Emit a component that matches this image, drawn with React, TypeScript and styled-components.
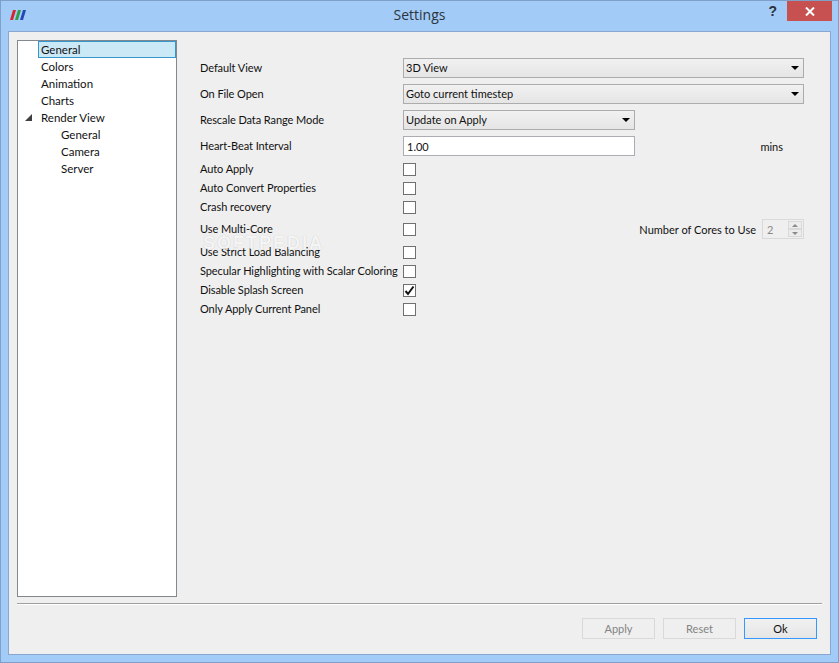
import styled, { createGlobalStyle } from 'styled-components';

const GlobalStyle = createGlobalStyle`
  html, body {
    margin: 0;
    padding: 0;
    background: #a3cbf7;
  }
  body {
    font-family: Lato, 'Noto Sans', sans-serif;
    font-size: 11px;
    color: #111;
  }
`;

const Window = styled.div`
  box-sizing: border-box;
  position: relative;
  display: flex;
  flex-direction: column;
  width: 839px;
  height: 663px;
  padding: 0 7px 7px;
  background: #a3cbf7;
  border: 1px solid #7f9fc6;
`;

const TitleBar = styled.div`
  display: flex;
  align-items: flex-start;
  height: 30px;
  flex-shrink: 0;
`;

const AppIcon = styled.svg`
  width: 16px;
  height: 11px;
  margin: 9px 0 0 2px;
`;

const Title = styled.div`
  position: absolute;
  top: 4px;
  left: 0;
  right: 0;
  text-align: center;
  font-family: 'Open Sans', sans-serif;
  font-size: 14px;
  color: #2a3440;
`;

const Help = styled.div`
  margin: 2px 10px 0 auto;
  font-family: 'Liberation Sans', sans-serif;
  font-size: 14px;
  font-weight: 700;
  color: #2b3138;
`;

const CloseButton = styled.div`
  display: flex;
  align-items: center;
  justify-content: center;
  width: 45px;
  height: 20px;
  margin-right: -1px;
  background: #c75050;
`;

const Client = styled.div`
  box-sizing: border-box;
  flex: 1;
  display: flex;
  flex-direction: column;
  padding: 8px;
  background: #efefef;
  border: 1px solid #8aa7cf;
`;

const Main = styled.div`
  display: flex;
  height: 557px;
`;

const Tree = styled.div`
  box-sizing: border-box;
  width: 160px;
  padding: 0;
  background: #fff;
  border: 1px solid #828790;
  flex-shrink: 0;
  font-size: 11.5px;
`;

const TreeRow = styled.div<{ $depth?: number; $selected?: boolean }>`
  box-sizing: border-box;
  position: relative;
  height: 17px;
  line-height: 15px;
  margin-left: 20px;
  padding-left: ${(p) => 2 + (p.$depth ?? 0) * 20}px;
  color: #111;
  background: ${(p) => (p.$selected ? '#cbe8f6' : 'transparent')};
  border: 1px solid ${(p) => (p.$selected ? '#3399cc' : 'transparent')};
`;

const Expander = styled.svg`
  position: absolute;
  left: -14px;
  top: 4px;
  width: 7px;
  height: 7px;
`;

const Form = styled.div`
  position: relative;
  width: 604px;
  margin: 18px 0 0 23px;
  display: flex;
  flex-direction: column;
  gap: 6px;
`;

const Row = styled.div<{ $tall?: boolean }>`
  display: grid;
  grid-template-columns: 203px 232px 1fr;
  align-items: center;
  height: ${(p) => (p.$tall ? 20 : 13)}px;
`;

const Label = styled.div`
  white-space: nowrap;
  line-height: 13px;
  letter-spacing: -0.08px;
  padding-bottom: 2px;
`;

const Combo = styled.div<{ $wide?: boolean }>`
  box-sizing: border-box;
  grid-column: ${(p) => (p.$wide ? '2 / 4' : '2')};
  display: flex;
  align-items: center;
  justify-content: space-between;
  height: 20px;
  padding: 0 5px 2px 2px;
  background: linear-gradient(#f1f1f1, #e5e5e5);
  border: 1px solid #acacac;
`;

const Caret = styled.span`
  width: 0;
  height: 0;
  border-left: 4px solid transparent;
  border-right: 4px solid transparent;
  border-top: 4px solid #000;
  margin: 2px -1px 0 0;
`;

const TextInput = styled.div`
  box-sizing: border-box;
  height: 20px;
  padding-left: 3px;
  line-height: 19px;
  background: #fff;
  border: 1px solid #abadb3;
`;

const Trail = styled.div`
  display: flex;
  align-items: center;
  justify-content: flex-end;
  white-space: nowrap;
`;

const Units = styled.span`
  margin-right: 21px;
`;

const Check = styled.div`
  box-sizing: border-box;
  display: flex;
  align-items: center;
  justify-content: center;
  width: 13px;
  height: 13px;
  background: #fff;
  border: 1px solid #707070;
`;

const Spin = styled.div`
  box-sizing: border-box;
  display: flex;
  align-items: center;
  justify-content: space-between;
  width: 42px;
  height: 20px;
  margin-left: 6px;
  padding: 1px 1px 1px 4px;
  color: #8a8a8a;
  background: #efefef;
  border: 1px solid #d9d9d9;
`;

const SpinButtons = styled.div`
  display: flex;
  flex-direction: column;
  width: 14px;
  height: 16px;
`;

const SpinButton = styled.div<{ $down?: boolean }>`
  flex: 1;
  display: flex;
  align-items: center;
  justify-content: center;
  background: #ececec;
  border: 1px solid #d9d9d9;

  &::after {
    content: '';
    border-left: 3px solid transparent;
    border-right: 3px solid transparent;
    border-${(p) => (p.$down ? 'top' : 'bottom')}: 3px solid #8a8a8a;
  }
`;

const Watermark = styled.div`
  position: absolute;
  left: 3px;
  top: 178px;
  font-family: 'Liberation Sans', sans-serif;
  font-size: 18px;
  line-height: 15px;
  font-weight: 700;
  letter-spacing: 2px;
  color: rgba(255, 255, 255, 0.85);
  text-shadow: 0 0 1px rgba(0, 0, 0, 0.22);
  pointer-events: none;
`;

const Separator = styled.div`
  height: 1px;
  margin-top: 6px;
  background: #a0a0a0;
  border-bottom: 1px solid #fff;
`;

const Footer = styled.div`
  display: flex;
  justify-content: flex-end;
  gap: 8px;
  margin: 13px 5px 0 0;
`;

const Button = styled.div<{ $disabled?: boolean; $primary?: boolean }>`
  box-sizing: border-box;
  width: 73px;
  height: 21px;
  line-height: 19px;
  text-align: center;
  color: ${(p) => (p.$disabled ? '#838383' : '#111')};
  background: ${(p) => (p.$disabled ? '#efefef' : 'linear-gradient(#f1f1f1, #e5e5e5)')};
  border: 1px solid ${(p) => (p.$disabled ? '#d9d9d9' : '#3399ff')};
`;

const treeItems = [
  { label: 'General', selected: true },
  { label: 'Colors' },
  { label: 'Animation' },
  { label: 'Charts' },
  { label: 'Render View', expander: true },
  { label: 'General', depth: 1 },
  { label: 'Camera', depth: 1 },
  { label: 'Server', depth: 1 },
];

const CheckRow = ({ label, checked }: { label: string; checked?: boolean }) => (
  <Row>
    <Label>{label}</Label>
    <Check>
      {checked && (
        <svg width="11" height="11" viewBox="0 0 11 11">
          <path d="M1.5 6 L4 9 L9.5 1.5" fill="none" stroke="#111" strokeWidth="2" />
        </svg>
      )}
    </Check>
  </Row>
);

export default function App() {
  return (
    <Window>
      <GlobalStyle />
      <TitleBar>
        <AppIcon viewBox="0 0 16 11">
          <polygon points="0,10 3,0 6,0 3,10" fill="#d8262c" />
          <polygon points="5,10 8,0 11,0 8,10" fill="#2f9e44" />
          <polygon points="10,10 13,0 16,0 13,10" fill="#2347b5" />
        </AppIcon>
        <Title>Settings</Title>
        <Help>?</Help>
        <CloseButton>
          <svg width="10" height="9" viewBox="0 0 10 9">
            <path d="M1 0.5 L9 8.5 M9 0.5 L1 8.5" stroke="#fff" strokeWidth="2" />
          </svg>
        </CloseButton>
      </TitleBar>
      <Client>
        <Main>
          <Tree>
            {treeItems.map((item, i) => (
              <TreeRow key={i} $depth={item.depth} $selected={item.selected}>
                {item.expander && (
                  <Expander viewBox="0 0 7 7">
                    <polygon points="7,0 7,7 0,7" fill="#404040" />
                  </Expander>
                )}
                {item.label}
              </TreeRow>
            ))}
          </Tree>
          <Form>
            <Row $tall>
              <Label>Default View</Label>
              <Combo $wide>3D View<Caret /></Combo>
            </Row>
            <Row $tall>
              <Label>On File Open</Label>
              <Combo $wide>Goto current timestep<Caret /></Combo>
            </Row>
            <Row $tall>
              <Label>Rescale Data Range Mode</Label>
              <Combo>Update on Apply<Caret /></Combo>
            </Row>
            <Row $tall>
              <Label>Heart-Beat Interval</Label>
              <TextInput>1.00</TextInput>
              <Trail><Units>mins</Units></Trail>
            </Row>
            <CheckRow label="Auto Apply" />
            <CheckRow label="Auto Convert Properties" />
            <CheckRow label="Crash recovery" />
            <Row $tall>
              <Label>Use Multi-Core</Label>
              <Check />
              <Trail>
                <span>Number of Cores to Use</span>
                <Spin>
                  2
                  <SpinButtons>
                    <SpinButton />
                    <SpinButton $down />
                  </SpinButtons>
                </Spin>
              </Trail>
            </Row>
            <CheckRow label="Use Strict Load Balancing" />
            <CheckRow label="Specular Highlighting with Scalar Coloring" />
            <CheckRow label="Disable Splash Screen" checked />
            <CheckRow label="Only Apply Current Panel" />
            <Watermark>SOFTPEDIA</Watermark>
          </Form>
        </Main>
        <Separator />
        <Footer>
          <Button $disabled>Apply</Button>
          <Button $disabled>Reset</Button>
          <Button $primary>Ok</Button>
        </Footer>
      </Client>
    </Window>
  );
}
